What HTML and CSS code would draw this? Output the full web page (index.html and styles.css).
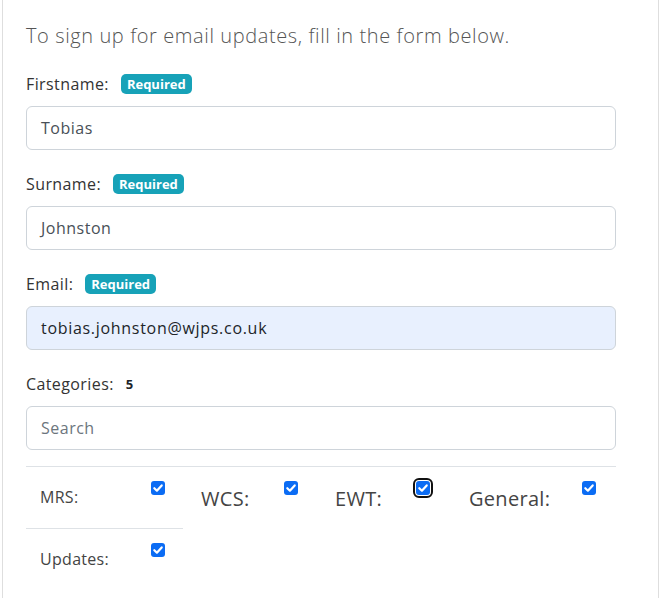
FILE: index.html
```html
<!DOCTYPE html>
<html lang="en">
<head>
<meta charset="utf-8">
<title>Email updates</title>
<link rel="stylesheet" href="styles.css">
</head>
<body>
<div class="card">
  <p class="lead">To sign up for email updates, fill in the form below.</p>

  <div class="field">
    <div class="label-row"><span class="label">Firstname:</span><span class="badge">Required</span></div>
    <div class="input">Tobias</div>
  </div>

  <div class="field">
    <div class="label-row"><span class="label">Surname:</span><span class="badge">Required</span></div>
    <div class="input">Johnston</div>
  </div>

  <div class="field">
    <div class="label-row"><span class="label">Email:</span><span class="badge">Required</span></div>
    <div class="input autofill">tobias.johnston@wjps.co.uk</div>
  </div>

  <div class="field last">
    <div class="label-row"><span class="label">Categories:</span><span class="count">5</span></div>
    <div class="input placeholder">Search</div>
  </div>

  <div class="cats">
    <div class="cat-row">
      <div class="cell sm">
        <span class="cat-label w-mrs">MRS:</span>
        <span class="check"><svg viewBox="0 0 14 14" width="14" height="14"><path d="M3.3 7.2 L5.9 9.7 L10.7 4.4" fill="none" stroke="#fff" stroke-width="2.2" stroke-linecap="round" stroke-linejoin="round"/></svg></span>
      </div>
      <div class="cell lg m-wcs">
        <span class="cat-label big w-wcs">WCS:</span>
        <span class="check"><svg viewBox="0 0 14 14" width="14" height="14"><path d="M3.3 7.2 L5.9 9.7 L10.7 4.4" fill="none" stroke="#fff" stroke-width="2.2" stroke-linecap="round" stroke-linejoin="round"/></svg></span>
      </div>
      <div class="cell lg m-ewt">
        <span class="cat-label big w-ewt">EWT:</span>
        <span class="check focus"><svg viewBox="0 0 14 14" width="14" height="14"><path d="M3.3 7.2 L5.9 9.7 L10.7 4.4" fill="none" stroke="#fff" stroke-width="2.2" stroke-linecap="round" stroke-linejoin="round"/></svg></span>
      </div>
      <div class="cell lg m-gen">
        <span class="cat-label big w-gen">General:</span>
        <span class="check"><svg viewBox="0 0 14 14" width="14" height="14"><path d="M3.3 7.2 L5.9 9.7 L10.7 4.4" fill="none" stroke="#fff" stroke-width="2.2" stroke-linecap="round" stroke-linejoin="round"/></svg></span>
      </div>
    </div>
    <div class="cat-row">
      <div class="cell sm noline">
        <span class="cat-label w-mrs">Updates:</span>
        <span class="check"><svg viewBox="0 0 14 14" width="14" height="14"><path d="M3.3 7.2 L5.9 9.7 L10.7 4.4" fill="none" stroke="#fff" stroke-width="2.2" stroke-linecap="round" stroke-linejoin="round"/></svg></span>
      </div>
    </div>
  </div>
</div>
</body>
</html>
```

FILE: styles.css
```css
* { box-sizing: border-box; }

html, body {
  margin: 0;
  padding: 0;
  background: #fff;
}

body {
  font-family: "Open Sans", "Noto Sans", "Liberation Sans", sans-serif;
  color: #212529;
  font-size: 16px;
}

.card {
  margin-left: 2px;
  width: 657px;
  min-height: 598px;
  border-left: 1px solid #dedede;
  border-right: 1px solid #dedede;
  padding: 21px 0 0 23px;
}

.lead {
  margin: 0 0 21px;
  font-size: 20px;
  line-height: 30px;
  font-weight: 300;
  letter-spacing: 0.6px;
  color: #555;
}

.field {
  width: 590px;
  margin-bottom: 22px;
}

.field.last {
  margin-bottom: 16px;
}

.label-row {
  display: flex;
  align-items: center;
  gap: 12px;
  height: 24px;
  margin-bottom: 10px;
}

.label {
  font-size: 16px;
  line-height: 24px;
  letter-spacing: 0.4px;
  color: #333;
}

.badge {
  display: inline-block;
  height: 20px;
  line-height: 20px;
  padding: 0 6px;
  border-radius: 5px;
  background: #17a2b8;
  color: #fff;
  font-size: 13px;
  font-weight: 700;
}

.count {
  font-size: 13px;
  font-weight: 700;
  color: #212529;
}

.input {
  height: 44px;
  border: 1px solid #ced4da;
  border-radius: 6px;
  padding: 0 14px;
  font-size: 16px;
  line-height: 42px;
  letter-spacing: 0.5px;
  color: #495057;
  background: #fff;
}

.input.autofill {
  background: #e8f0fe;
  color: #212529;
  letter-spacing: 0.7px;
}

.input.placeholder {
  color: #6c757d;
}

.cats {
  width: 590px;
  border-top: 1px solid #dee2e6;
}

.cat-row {
  display: flex;
  align-items: flex-start;
}

.cell {
  display: flex;
  align-items: flex-start;
  padding-top: 14px;
}

.cell.sm {
  width: 157px;
  padding-left: 14px;
  padding-bottom: 19px;
  border-bottom: 1px solid #dee2e6;
}

.cell.sm.noline {
  border-bottom: none;
}

.cat-label {
  display: block;
  margin-top: 4px;
  font-size: 16px;
  line-height: 24px;
  letter-spacing: 0.3px;
  color: #444;
}

.cat-label.big {
  margin-top: 3px;
  font-size: 20px;
  line-height: 30px;
}

.w-mrs { width: 111px; }
.w-wcs { width: 83px; }
.w-ewt { width: 81px; }
.w-gen { width: 113px; }

.m-wcs { margin-left: 18px; }
.m-ewt { margin-left: 37px; }
.m-gen { margin-left: 39px; }

.check {
  display: block;
  width: 14px;
  height: 14px;
  border-radius: 3px;
  background: #0b6cf4;
  flex: none;
}

.check svg {
  display: block;
}

.check.focus {
  outline: 2px solid #111;
  outline-offset: 1px;
}
```
